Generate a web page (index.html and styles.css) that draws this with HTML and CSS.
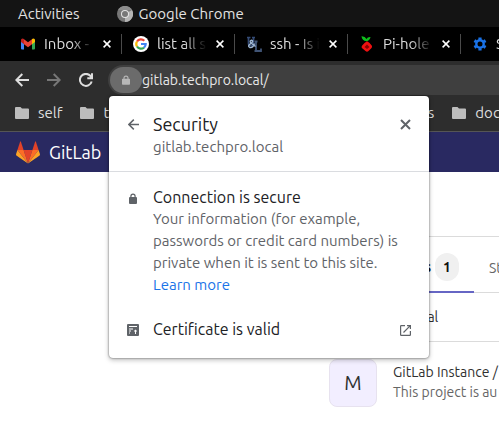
FILE: index.html
```html
<!DOCTYPE html>
<html lang="en">
<head>
<meta charset="utf-8">
<title>GitLab</title>
<link rel="stylesheet" href="styles.css">
</head>
<body>
<header class="desktop-bar">
  <button class="activities">Activities</button>
  <button class="app-menu">
    <svg width="16" height="16" viewBox="0 0 16 16"><circle cx="8" cy="8" r="8" fill="#777"/><path d="M8 8 15 4A8 8 0 0 1 8 16Z" fill="#b5b5b5"/><path d="M1 4A8 8 0 0 1 15 4H8Z" fill="#8c8c8c"/><circle cx="8" cy="8" r="4" fill="#e4e4e4"/><circle cx="8" cy="8" r="3" fill="#777"/></svg>
    <span>Google Chrome</span>
  </button>
</header>

<nav class="tab-strip">
  <div class="tab">
    <svg class="favicon" viewBox="0 0 16 16"><path d="M1 4v8.500q0 1 1 1h2V7z" fill="#4285f4"/><path d="M15 4v8.500q0 1-1 1h-2V7z" fill="#34a853"/><path d="M1 6V4q0-1.500 1.500-1.500L4 3v5.300z" fill="#c5221f"/><path d="M15 6V4q0-1.500-1.500-1.500L12 3v5.300z" fill="#fbbc04"/><path d="M4 8.300V3.200l4 3 4-3v5.100l-4 3z" fill="#ea4335"/></svg>
    <span class="tab-title">Inbox -</span>
    <button class="tab-close" aria-label="Close tab"><svg width="8" height="8" viewBox="0 0 8 8"><path d="M.6.6 7.400 7.400M7.400.6.6 7.400"/></svg></button>
  </div>
  <div class="tab">
    <svg class="favicon" viewBox="0 0 16 16"><circle cx="8" cy="8" r="8" fill="#fff"/><g fill="none" stroke-width="2.200"><path d="M4 5.500A4.700 4.700 0 0 1 11.300 4.700" stroke="#ea4335"/><path d="M4 5.500A4.700 4.700 0 0 0 4 10.500" stroke="#fbbc05"/><path d="M4 10.500A4.700 4.700 0 0 0 11 11.600" stroke="#34a853"/><path d="M11 11.600A4.700 4.700 0 0 0 12.700 8H8" stroke="#4285f4"/></g></svg>
    <span class="tab-title">list all s</span>
    <button class="tab-close" aria-label="Close tab"><svg width="8" height="8" viewBox="0 0 8 8"><path d="M.6.6 7.400 7.400M7.400.6.6 7.400"/></svg></button>
  </div>
  <div class="tab">
    <svg class="favicon" viewBox="0 0 16 16"><g fill="none"><path d="M1 1.500h3.500M2.500 2v5.500q0 2 2.500 2t2.500-2V2M6 1.500h3" stroke="#344b76" stroke-width="1.700"/><path d="M8.500 5.500h3M10 6v9M8.500 15h6.500v-2.500" stroke="#405475" stroke-width="1.800"/><path d="M9.500 10.500 4.500 6.500q-1-2 1-2.300 2 .5.500 2.300l-2.500 2q-2 2 .5 3 3 .5 4.500-4" stroke="#9fb7d3" stroke-width="1.400"/></g></svg>
    <span class="tab-title">ssh - Is i</span>
    <button class="tab-close" aria-label="Close tab"><svg width="8" height="8" viewBox="0 0 8 8"><path d="M.6.6 7.400 7.400M7.400.6.6 7.400"/></svg></button>
  </div>
  <div class="tab">
    <svg class="favicon" viewBox="0 0 16 16"><path d="M7.500 5.200Q3 4.500 2.500.2 6 0 7.500 3 8.500.8 11.500 1 11 4.600 7.500 5.200Z" fill="#0ebd1c"/><path d="M8 5.200 10.300 6.800 12.700 9.500Q13.500 11 12.300 12.300L9.500 15Q8 16.500 6.500 15L3.200 12.200Q2 11 3.200 9.500L5.500 6.900Z" fill="#f01010"/><path d="M8 8.500 10.500 11 8 13 5.500 11Z" fill="#870000"/></svg>
    <span class="tab-title">Pi-hole</span>
    <button class="tab-close" aria-label="Close tab"><svg width="8" height="8" viewBox="0 0 8 8"><path d="M.6.6 7.400 7.400M7.400.6.6 7.400"/></svg></button>
  </div>
  <div class="tab">
    <svg class="favicon" viewBox="0 0 16 16"><g fill="none" stroke="#1a73e8"><circle cx="8" cy="8" r="3.700" stroke-width="2.400"/><path d="M8 1.500v2M8 12.500v2M2.400 4.700l1.800 1M11.800 10.300l1.800 1M2.400 11.300l1.800-1M11.800 5.700l1.800-1" stroke-width="3.200"/></g></svg>
    <span class="tab-title">Settings</span>
  </div>
</nav>

<div class="toolbar">
  <button class="nav-button" aria-label="Back"><svg width="14" height="14" viewBox="0 0 14 14"><path d="M14 7H1.500M7.300 1 1.300 7l6 6"/></svg></button>
  <button class="nav-button off" aria-label="Forward"><svg width="14" height="14" viewBox="0 0 14 14"><path d="M0 7h12.500M6.700 1l6 6-6 6"/></svg></button>
  <button class="nav-button" aria-label="Reload"><svg width="14" height="14" viewBox="0 0 14 14"><path d="M12.700 8.500A6 6 0 1 1 11.500 3L13 4.800M13 .3v5H8.300"/></svg></button>
  <div class="address">
    <button class="site-info" aria-label="View site information"><svg width="10" height="12" viewBox="0 0 10 12"><path d="M1.800 4.500V3.600a3.200 3.200 0 0 1 6.400 0v.9H9q1 0 1 1V11q0 1-1 1H1q-1 0-1-1V5.500q0-1 1-1Zm1.400 0h3.600V3.600a1.800 1.800 0 0 0-3.600 0Z"/></svg></button>
    <input class="url" aria-label="Address" value="gitlab.techpro.local/">
  </div>
</div>

<nav class="bookmarks">
  <a class="bookmark" href="#"><svg width="14" height="12" viewBox="0 0 14 12"><path d="M1 0h4.500L7 1.500h6q1 0 1 1V11q0 1-1 1H1q-1 0-1-1V1q0-1 1-1Z"/></svg>self</a>
  <a class="bookmark" href="#"><svg width="14" height="12" viewBox="0 0 14 12"><path d="M1 0h4.500L7 1.500h6q1 0 1 1V11q0 1-1 1H1q-1 0-1-1V1q0-1 1-1Z"/></svg>t</a>
  <a class="bookmark last-folder" href="#">s</a>
  <a class="bookmark" href="#"><svg width="14" height="12" viewBox="0 0 14 12"><path d="M1 0h4.500L7 1.500h6q1 0 1 1V11q0 1-1 1H1q-1 0-1-1V1q0-1 1-1Z"/></svg>doc</a>
</nav>

<div class="site-bar">
  <a class="brand" href="#">
    <svg width="24" height="23" viewBox="0 0 24 23"><path d="m12 22.500 4.400-13.600H7.600Z" fill="#e24329"/><path d="M12 22.500 7.600 8.900H1.400Z" fill="#fc6d26"/><path d="M1.400 8.900.1 13q-.3 1.100.6 1.700L12 22.500Z" fill="#fca326"/><path d="M1.400 8.900h6.200L4.900.7q-.4-.9-.8 0Z" fill="#e24329"/><path d="m12 22.500 4.400-13.600h6.200Z" fill="#fc6d26"/><path d="m22.600 8.900 1.300 4.100q.3 1.100-.6 1.700L12 22.500Z" fill="#fca326"/><path d="M22.600 8.900h-6.200L19.100.7q.4-.9.800 0Z" fill="#e24329"/></svg>
    <span>GitLab</span>
  </a>
</div>

<main class="content">
  <nav class="project-tabs">
    <a class="project-tab active" href="#">Projects <span class="count">1</span></a>
    <a class="project-tab" href="#">Starred</a>
  </nav>
  <div class="filters"><a href="#">Personal</a></div>
  <article class="project">
    <div class="avatar">M</div>
    <div class="project-text">
      <a class="project-name" href="#">GitLab Instance /</a>
      <p class="project-note">This project is au</p>
    </div>
  </article>
</main>

<section class="popup" role="dialog" aria-labelledby="popup-title">
  <header class="popup-head">
    <button class="popup-icon" aria-label="Back"><svg width="11" height="11" viewBox="0 0 11 11" class="line"><path d="M11 5.500H1M5.800.6.9 5.500l4.900 4.900"/></svg></button>
    <div class="popup-main">
      <h1 id="popup-title">Security</h1>
      <p>gitlab.techpro.local</p>
    </div>
    <button class="popup-icon" aria-label="Close"><svg width="11" height="11" viewBox="0 0 11 11" class="line heavy"><path d="m1 1 9 9M10 1l-9 9"/></svg></button>
  </header>
  <div class="popup-row">
    <span class="popup-icon"><svg width="8" height="11" viewBox="0 0 8 11"><path d="M1.300 4V3.200a2.700 2.700 0 0 1 5.400 0V4H7q1 0 1 1v5q0 1-1 1H1q-1 0-1-1V5q0-1 1-1Zm1.200 0h3V3.200a1.500 1.500 0 0 0-3 0Z"/></svg></span>
    <div class="popup-main">
      <h2>Connection is secure</h2>
      <p>Your information (for example,<br>passwords or credit card numbers) is<br>private when it is sent to this site.<br><a href="#">Learn more</a></p>
    </div>
  </div>
  <div class="popup-row">
    <span class="popup-icon"><svg width="12" height="12" viewBox="0 0 12 12"><rect width="12" height="12" rx="1"/><path d="M2 2.500h8M2 5h4M2 7h2M2 9h1" stroke="#fff"/><path d="M8.500 5.500 10 7 8.500 8.500 7 7ZM8 8h1v2H8Z" fill="#fff"/></svg></span>
    <h2 class="popup-main">Certificate is valid</h2>
    <button class="popup-icon" aria-label="Show certificate"><svg width="11" height="11" viewBox="0 0 11 11" class="line thin"><path d="M5 .6H1.200Q.6.600.6 1.200v8.600q0 .6.6.6h8.600q.6 0 .6-.6V6M7 .6h3.400V4M10.300.7 3.500 7.500"/></svg></button>
  </div>
</section>
</body>
</html>
```

FILE: styles.css
```css
* { box-sizing: border-box; }

body {
  margin: 0;
  min-height: 100vh;
  position: relative;
  overflow: hidden;
  background: #fff;
  font: 15px/20px Ubuntu, "Noto Sans", sans-serif;
}

button {
  display: flex;
  align-items: center;
  justify-content: center;
  margin: 0;
  padding: 0;
  border: 0;
  background: none;
  color: inherit;
  font: inherit;
}

a { color: inherit; text-decoration: none; }
h1, h2, p { margin: 0; font-weight: 400; }
svg { display: block; flex: none; }

.desktop-bar {
  display: flex;
  gap: 37px;
  height: 27px;
  padding-left: 18px;
  background: #141414;
  color: #e2e2e2;
}
.app-menu { gap: 6px; }

.tab-strip {
  display: flex;
  height: 34px;
  padding-left: 9px;
  overflow: hidden;
  background: #000;
  color: #dedede;
}
.tab {
  display: flex;
  flex: none;
  align-items: center;
  width: 113px;
  padding: 0 11px;
  background: linear-gradient(#4a4a4a, #4a4a4a) right / 1px 20px no-repeat;
}
.favicon { width: 16px; height: 16px; margin-right: 8px; }
.tab-title {
  flex: 1;
  min-width: 0;
  overflow: hidden;
  white-space: nowrap;
  mask-image: linear-gradient(90deg, #000 50%, transparent 92%);
}
.tab-close { width: 8px; height: 16px; stroke: #fff; stroke-width: 1.5; margin-left: 5px; }

.toolbar {
  display: flex;
  align-items: center;
  height: 38px;
  padding-left: 15px;
  border-top: 3px solid #2d2d2d;
  border-bottom: 4px solid #2d2d2d;
  background: #2d2d2d;
}
.nav-button {
  width: 14px;
  margin-right: 18px;
  fill: none;
  stroke: #dedede;
  stroke-width: 2;
}
.off { stroke: #777; }
.address {
  display: flex;
  flex: 1;
  align-items: center;
  height: 30px;
  padding-left: 2px;
  margin-left: -3px;
  border-radius: 15px 0 0 15px;
  background: #3f3f3f;
}
.site-info {
  width: 32px;
  height: 26px;
  border-radius: 13px;
  background: #6b6b6b;
  fill: #b8b8b8;
}
.site-info svg { width: 8px; }
.url {
  flex: 1;
  min-width: 0;
  padding: 0;
  border: 0;
  outline: 0;
  background: none;
  color: #e8e8e8;
  font: inherit;
  font-size: 14px;
}

.bookmarks {
  display: flex;
  align-items: center;
  gap: 18px;
  height: 33px;
  padding: 0 0 5px 15px;
  overflow: hidden;
  border-bottom: 1px solid #555;
  background: #2d2d2d;
  color: #dedede;
}
.bookmark { display: flex; flex: none; align-items: center; gap: 9px; fill: #bdbdbd; }
.last-folder { width: 307px; justify-content: flex-end; }

.site-bar {
  display: flex;
  align-items: center;
  height: 40px;
  padding-left: 16px;
  background: #292961;
}
.brand {
  display: flex;
  align-items: center;
  gap: 9px;
  color: #fff;
  font-size: 18px;
}

.content {
  margin-top: 64px;
  padding-left: 329px;
  overflow: hidden;
  color: #303030;
  font-size: 14px;
  white-space: nowrap;
}
.project-tabs {
  display: flex;
  height: 57px;
  border-top: 1px solid #dbdbdb;
  border-bottom: 1px solid #dbdbdb;
}
.project-tab {
  display: flex;
  flex: none;
  align-items: center;
  gap: 4px;
  height: 56px;
  padding: 5px 15px 0;
  color: #666;
}
.active {
  justify-content: flex-end;
  width: 145px;
  border-bottom: 2px solid #6666c4;
  color: #111;
  font-weight: 700;
}
.count {
  padding: 4px 8px;
  border-radius: 14px;
  background: #f0f0f0;
}
.filters {
  display: flex;
  align-items: center;
  height: 49px;
  padding-left: 55px;
  border-bottom: 1px solid #dbdbdb;
}
.project { display: flex; gap: 16px; padding-top: 17px; }
.avatar {
  display: grid;
  flex: none;
  place-items: center;
  width: 48px;
  height: 48px;
  border: 1px solid #e7e2ef;
  border-radius: 8px;
  background: #f2eeff;
  font-size: 20px;
}
.project-text { padding-top: 3px; }
.project-note { color: #666; font-size: 14px; }

.popup {
  position: absolute;
  top: 96px;
  left: 109px;
  width: 320px;
  padding-bottom: 16px;
  border-radius: 4px;
  background: #fff;
  box-shadow: 0 0 2px #0009, 0 2px 5px #0004;
  color: #202124;
}
.popup-head, .popup-row { display: flex; padding: 0 16px; }
.popup-head { padding-top: 16px; padding-bottom: 13px; border-bottom: 1px solid #dadce0; }
.popup-row { padding-top: 14px; }
.popup-row + .popup-row { padding-top: 22px; }
.popup-icon {
  display: flex;
  flex: none;
  align-items: center;
  justify-content: center;
  width: 16px;
  height: 24px;
  fill: #5f6368;
}
.popup-main { flex: 1; min-width: 0; padding-left: 12px; white-space: nowrap; }
.popup h1 { font-size: 18px; line-height: 24px; }
.popup h2 { font-size: 16px; line-height: 22px; }
.popup p { color: #5f6368; line-height: 22px; }
.popup p a { color: #1a73e8; }
.line { fill: none; stroke: #5f6368; stroke-width: 1.5; }
.heavy { stroke-width: 2; }
.thin { stroke-width: 1.2; }
```
